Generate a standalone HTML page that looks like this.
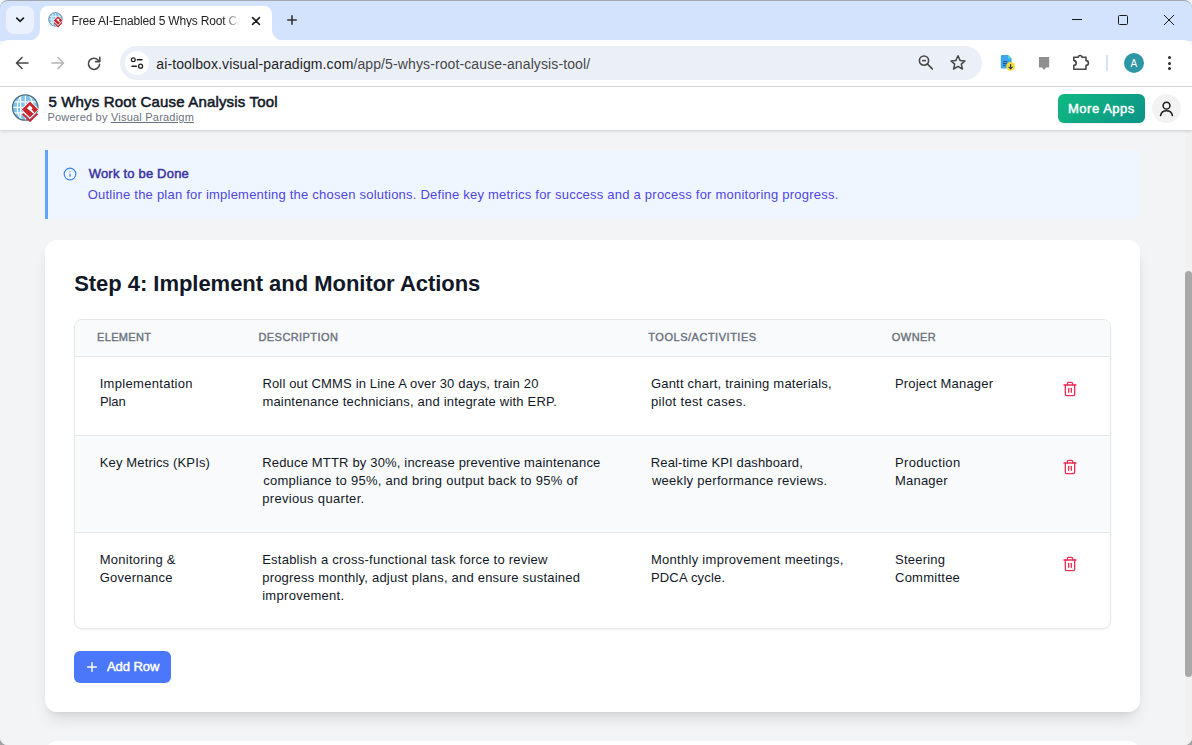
<!DOCTYPE html>
<html><head><meta charset="utf-8">
<style>
*{box-sizing:border-box;margin:0;padding:0}
html,body{width:1192px;height:745px;overflow:hidden;background:#f3f4f6;font-family:"Liberation Sans",sans-serif;position:relative}
.abs{position:absolute}
.t{position:absolute;white-space:nowrap;z-index:3}
</style></head><body>

<div class="abs" style="left:45px;top:150px;width:1095px;height:69px;background:#eff6ff;border-left:3px solid #60a5fa;border-radius:0 6px 6px 0"></div>
<svg class="abs" style="left:63.3px;top:167.4px" width="14" height="14" viewBox="0 0 24 24">
 <circle cx="12" cy="12" r="10" fill="none" stroke="#3b82f6" stroke-width="2"/>
 <path d="M12 16 V12 M12 8 H12.01" fill="none" stroke="#3b82f6" stroke-width="2" stroke-linecap="round"/>
</svg>
<div class="abs" style="left:45px;top:240px;width:1095px;height:472px;background:#fff;border-radius:12px;box-shadow:0 10px 15px -3px rgba(0,0,0,.1),0 4px 6px -4px rgba(0,0,0,.1)"></div>
<div class="abs" style="left:45px;top:741px;width:1095px;height:300px;background:#fff;border-radius:12px;box-shadow:0 10px 15px -3px rgba(0,0,0,.1),0 4px 6px -4px rgba(0,0,0,.1)"></div>
<div class="abs" style="left:74px;top:319px;width:1037px;height:310px;border:1px solid #e5e7eb;border-radius:8px;overflow:hidden;box-shadow:0 1px 2px rgba(0,0,0,.05)">
  <div class="abs" style="left:0;top:0;width:1035px;height:37px;background:#f9fafb;border-bottom:1px solid #e5e7eb"></div>
  <div class="abs" style="left:0;top:115px;width:1035px;height:98px;background:#f9fafb;border-top:1px solid #e5e7eb;border-bottom:1px solid #e5e7eb"></div>
</div>
<svg class="abs" style="left:1062px;top:380.5px" width="16" height="16" viewBox="0 0 24 24" fill="none" stroke="#ec2f55" stroke-width="2" stroke-linecap="round" stroke-linejoin="round"><path d="M3 6h18"/><path d="M19 6v14c0 1-1 2-2 2H7c-1 0-2-1-2-2V6"/><path d="M8 6V4c0-1 1-2 2-2h4c1 0 2 1 2 2v2"/><line x1="10" x2="10" y1="11" y2="17"/><line x1="14" x2="14" y1="11" y2="17"/></svg><svg class="abs" style="left:1062px;top:458.5px" width="16" height="16" viewBox="0 0 24 24" fill="none" stroke="#ec2f55" stroke-width="2" stroke-linecap="round" stroke-linejoin="round"><path d="M3 6h18"/><path d="M19 6v14c0 1-1 2-2 2H7c-1 0-2-1-2-2V6"/><path d="M8 6V4c0-1 1-2 2-2h4c1 0 2 1 2 2v2"/><line x1="10" x2="10" y1="11" y2="17"/><line x1="14" x2="14" y1="11" y2="17"/></svg><svg class="abs" style="left:1062px;top:555.5px" width="16" height="16" viewBox="0 0 24 24" fill="none" stroke="#ec2f55" stroke-width="2" stroke-linecap="round" stroke-linejoin="round"><path d="M3 6h18"/><path d="M19 6v14c0 1-1 2-2 2H7c-1 0-2-1-2-2V6"/><path d="M8 6V4c0-1 1-2 2-2h4c1 0 2 1 2 2v2"/><line x1="10" x2="10" y1="11" y2="17"/><line x1="14" x2="14" y1="11" y2="17"/></svg>
<div class="abs" style="left:74px;top:651px;width:97px;height:32px;background:#4b77fb;border-radius:6px"></div>
<svg class="abs" style="left:84px;top:659px" width="16" height="16"><path d="M8 3.6 V12.4 M3.6 8 H12.4" stroke="#fff" stroke-width="1.4" stroke-linecap="round"/></svg>
<div class="abs" style="left:1185px;top:130px;width:7px;height:615px;background:#f1f1f1"></div>
<div class="abs" style="left:1185px;top:271px;width:7px;height:406px;background:#a8a8a8;border-radius:4px"></div>


<div class="abs" style="left:0;top:0;width:1192px;height:41px;background:#d3e3fd;border-radius:8px 8px 0 0;"></div>
<div class="abs" style="left:0;top:0;width:1192px;height:20px;border-top:1px solid #a3a7ad;border-radius:8px 8px 0 0;"></div>
<div class="abs" style="left:6px;top:6px;width:28px;height:28px;background:#ebf1fd;border-radius:8px"></div>
<svg class="abs" style="left:6px;top:6px" width="28" height="28"><path d="M10.8 12.1 L14.1 15.3 L17.4 12.1" fill="none" stroke="#1f1f1f" stroke-width="1.8" stroke-linecap="round" stroke-linejoin="miter"/></svg>
<!-- active tab -->
<svg class="abs" style="left:0;top:0" width="300" height="42">
 <path d="M40 40 L40 15 Q40 6 49 6 L263 6 Q272 6 272 15 L272 41 L40 41 Z" fill="#fff"/>
 <path d="M29 40.5 A11 11 0 0 0 40 29.5 L40 41 L29 41 Z" fill="#fff"/>
 <path d="M272 29.5 A11 11 0 0 0 283 40.5 L283 41 L272 41 Z" fill="#fff"/>
</svg>
<!-- favicon -->
<svg class="abs" style="left:44px;top:8px" width="24" height="24" viewBox="44 8 24 24"><g transform="translate(55.5 19.4) scale(0.54) translate(-25.2 -107.5)">
 <defs><clipPath id="gc2"><circle cx="25.2" cy="107.5" r="12.4"/></clipPath></defs>
 <circle cx="25.2" cy="107.5" r="12.6" fill="#7cc4ee"/>
 <g clip-path="url(#gc2)" stroke="#fff" stroke-width="1.2" fill="none">
  <path d="M10 101.8 H40 M10 107.3 H40 M10 112.8 H40 M20.6 94 V121 M25.4 94 V121"/>
  <ellipse cx="25.2" cy="107.5" rx="8" ry="13.5"/>
 </g>
 <circle cx="25.2" cy="107.5" r="12.7" fill="none" stroke="#4f6e82" stroke-width="1.3"/>
 <path d="M30 100.6 L39.1 109.5 L30 118.4 L20.9 109.5 Z" fill="#fff"/>
 <path d="M21.3 113.2 L30 121.9 L38.7 113.2 L38.7 111.2 L30 119.9 L21.3 111.2 Z" fill="#fff"/>
 <path d="M30 101.6 L38.1 109.5 L30 117.4 L21.9 109.5 Z" fill="#c8242e"/>
 <path d="M29.8 105.2 L32.7 108.1 L31.5 109.3 L34.6 112.9 L33.7 113.7 L26.8 108.2 Z" fill="#fff"/>
 <path d="M22.6 113.6 L30 121 L37.4 113.6" fill="none" stroke="#c8242e" stroke-width="1.9"/>
</g></svg>
<svg class="abs" style="left:248px;top:13px" width="16" height="16"><path d="M4.6 4.6 L11.4 11.4 M11.4 4.6 L4.6 11.4" stroke="#1f1f1f" stroke-width="1.6" stroke-linecap="round"/></svg>
<svg class="abs" style="left:284px;top:12px" width="16" height="16"><path d="M8 3.2 V12.8 M3.2 8 H12.8" stroke="#333" stroke-width="1.6" stroke-linecap="butt"/></svg>
<!-- window controls -->
<div class="abs" style="left:1072px;top:19px;width:10px;height:1px;background:#1a1a1a"></div>
<div class="abs" style="left:1118px;top:15px;width:10px;height:10px;border:1px solid #1a1a1a;border-radius:1.5px"></div>
<svg class="abs" style="left:1163px;top:14px" width="12" height="12"><path d="M1 1 L11 11 M11 1 L1 11" stroke="#1a1a1a" stroke-width="1"/></svg>
<!-- toolbar -->
<div class="abs" style="left:0;top:40px;width:1192px;height:47px;background:#fff;border-bottom:1px solid #d4d7dc;border-radius:8px 8px 0 0"></div>
<svg class="abs" style="left:14px;top:55px" width="16" height="16"><path d="M14 8 H3 M8 2.5 L2.5 8 L8 13.5" fill="none" stroke="#474747" stroke-width="1.6" stroke-linecap="round" stroke-linejoin="round"/></svg>
<svg class="abs" style="left:50px;top:55px" width="16" height="16"><path d="M2 8 H13 M8 2.5 L13.5 8 L8 13.5" fill="none" stroke="#b4b4b4" stroke-width="1.6" stroke-linecap="round" stroke-linejoin="round"/></svg>
<svg class="abs" style="left:86px;top:55px" width="16" height="16"><path d="M12.6 5.6 A5.6 5.6 0 1 0 13.6 9.2" fill="none" stroke="#474747" stroke-width="1.6" stroke-linecap="round"/><path d="M13.8 2.3 V6.6 H9.5" fill="none" stroke="#474747" stroke-width="1.6" stroke-linecap="round" stroke-linejoin="round"/></svg>
<div class="abs" style="left:120px;top:46px;width:862px;height:34px;background:#ebf0f8;border-radius:17px"></div>
<div class="abs" style="left:125px;top:51px;width:24px;height:24px;background:#fff;border-radius:12px"></div>
<svg class="abs" style="left:129px;top:55px" width="16" height="16">
 <circle cx="4.3" cy="4.7" r="1.9" fill="none" stroke="#1f1f1f" stroke-width="1.25"/><path d="M8.3 4.7 H13" stroke="#1f1f1f" stroke-width="1.4" stroke-linecap="round"/>
 <circle cx="11.6" cy="11.2" r="2" fill="none" stroke="#1f1f1f" stroke-width="1.25"/><path d="M3 11.2 H7.4" stroke="#1f1f1f" stroke-width="1.4" stroke-linecap="round"/>
</svg>
<svg class="abs" style="left:916px;top:53px" width="20" height="20">
 <circle cx="8" cy="7.6" r="4.6" fill="none" stroke="#474747" stroke-width="1.6"/><path d="M6 7.6 H10" stroke="#474747" stroke-width="1.5"/><path d="M11.4 11 L16.3 15.9" stroke="#474747" stroke-width="1.7" stroke-linecap="round"/>
</svg>
<svg class="abs" style="left:948px;top:53px" width="20" height="20">
 <path d="M10 2.8 L12.1 7.4 L17 7.9 L13.3 11.1 L14.4 16 L10 13.4 L5.6 16 L6.7 11.1 L3 7.9 L7.9 7.4 Z" fill="none" stroke="#474747" stroke-width="1.5" stroke-linejoin="round"/>
</svg>
<!-- extension icons -->
<svg class="abs" style="left:998px;top:53px" width="20" height="20">
 <path d="M4 2 H10.2 L13.6 5.4 V14.3 A1.2 1.2 0 0 1 12.4 15.5 H4 A1.2 1.2 0 0 1 2.8 14.3 V3.2 A1.2 1.2 0 0 1 4 2 Z" fill="#3ea5ef"/><path d="M10.2 2 L13.6 5.4 H10.2 Z" fill="#55e6c6"/>
 <path d="M5 8.6 H9.4 M5 10.5 H9.4 M5 12.3 H8.4" stroke="#1d4f86" stroke-width="0.9"/>
 <circle cx="12.6" cy="13.4" r="4.4" fill="#f6da35"/><path d="M12.6 10.9 V15.6 M10.6 13.8 L12.6 15.8 L14.6 13.8" fill="none" stroke="#1f3558" stroke-width="1.1"/>
</svg>
<svg class="abs" style="left:1035px;top:53px" width="20" height="20">
 <path d="M3.9 4 H14.2 V14.5 H11.1 L9.05 17 L7 14.5 H3.9 Z" fill="#8f8f8f"/>
</svg>
<svg class="abs" style="left:1066px;top:48px" width="30" height="30" viewBox="1066 48 30 30">
 <path d="M1073.8 57.3 H1078.3 A1.8 1.8 0 0 1 1081.9 57.3 H1086 V60.6 A2.4 2.4 0 0 1 1086 65.4 V69.2 H1073.8 V65.4 A2.4 2.4 0 0 0 1073.8 60.6 Z" fill="none" stroke="#474747" stroke-width="1.6" stroke-linejoin="round"/>
</svg>
<div class="abs" style="left:1106px;top:55px;width:2px;height:16px;background:#d3e3fd"></div>
<div class="abs" style="left:1124px;top:53px;width:20px;height:20px;background:#2e96a4;border-radius:10px"></div>
<div class="t" style="left:1130.6px;top:58.6px;font-size:10px;line-height:10px;color:#fff;letter-spacing:0">A</div>
<div class="abs" style="left:1168.3px;top:56px;width:3px;height:3px;border-radius:2px;background:#2e2e2e"></div>
<div class="abs" style="left:1168.3px;top:61.5px;width:3px;height:3px;border-radius:2px;background:#2e2e2e"></div>
<div class="abs" style="left:1168.3px;top:67px;width:3px;height:3px;border-radius:2px;background:#2e2e2e"></div>


<div class="abs" style="left:0;top:87px;width:1192px;height:43px;background:#fff;box-shadow:0 2px 3px rgba(0,0,0,.08),0 1px 2px rgba(0,0,0,.06);z-index:1"></div>
<svg class="abs" style="left:0;top:87px;z-index:2" width="50" height="43" viewBox="0 87 50 43">
 <defs><clipPath id="gc"><circle cx="25.2" cy="107.5" r="12.4"/></clipPath></defs>
 <circle cx="25.2" cy="107.5" r="12.6" fill="#7cc4ee"/>
 <g clip-path="url(#gc)" stroke="#fff" stroke-width="1.2" fill="none">
  <path d="M10 101.8 H40 M10 107.3 H40 M10 112.8 H40 M20.6 94 V121 M25.4 94 V121"/>
  <ellipse cx="25.2" cy="107.5" rx="8" ry="13.5"/>
 </g>
 <circle cx="25.2" cy="107.5" r="12.7" fill="none" stroke="#4f6e82" stroke-width="1.3"/>
 <path d="M30 100.6 L39.1 109.5 L30 118.4 L20.9 109.5 Z" fill="#fff"/>
 <path d="M21.3 113.2 L30 121.9 L38.7 113.2 L38.7 111.2 L30 119.9 L21.3 111.2 Z" fill="#fff"/>
 <path d="M30 101.6 L38.1 109.5 L30 117.4 L21.9 109.5 Z" fill="#c8242e"/>
 <path d="M29.8 105.2 L32.7 108.1 L31.5 109.3 L34.6 112.9 L33.7 113.7 L26.8 108.2 Z" fill="#fff"/>
 <path d="M22.6 113.6 L30 121 L37.4 113.6" fill="none" stroke="#c8242e" stroke-width="1.9"/>
</svg>
<div class="abs" style="left:1058px;top:94px;width:87px;height:29px;border-radius:6px;background:linear-gradient(135deg,#10b981,#0d9488);z-index:2;box-shadow:0 1px 2px rgba(0,0,0,.08)"></div>
<div class="abs" style="left:1152px;top:94px;width:29px;height:29px;border-radius:50%;background:#f3f3f3;z-index:2"></div>
<svg class="abs" style="left:1158px;top:100px;z-index:2" width="17" height="17" viewBox="0 0 24 24">
 <circle cx="12" cy="8" r="4.8" fill="none" stroke="#1f1f1f" stroke-width="2.2"/>
 <path d="M3.6 22 A8.6 8.6 0 0 1 20.4 22" fill="none" stroke="#1f1f1f" stroke-width="2.2" stroke-linecap="round"/>
</svg>

<div class="t" style="left:71.50px;top:14.60px;font-size:12px;line-height:12px;font-weight:400;color:#1f1f1f;letter-spacing:-0.177px;width:170px;overflow:hidden;-webkit-mask-image:linear-gradient(90deg,#000 151px,transparent 168px);">Free AI-Enabled 5 Whys Root Cause Analysis Tool</div>
<div class="t" style="left:156.30px;top:56.50px;font-size:14px;line-height:14px;font-weight:400;color:#1f1f1f;letter-spacing:0.112px;"><span style="color:#1f1f1f">ai-toolbox.visual-paradigm.com</span><span style="color:#474747">/app/5-whys-root-cause-analysis-tool/</span></div>
<div class="t" style="left:48.40px;top:94.10px;font-size:15px;line-height:15px;font-weight:400;-webkit-text-stroke:0.525px #111827;color:#111827;letter-spacing:0.173px;">5 Whys Root Cause Analysis Tool</div>
<div class="t" style="left:47.40px;top:112.00px;font-size:11px;line-height:11px;font-weight:400;color:#6b7280;letter-spacing:0.216px;">Powered by <span style="text-decoration:underline;text-decoration-color:#6b7280;text-underline-offset:1px">Visual Paradigm</span></div>
<div class="t" style="left:1068.00px;top:101.80px;font-size:13px;line-height:13px;font-weight:400;-webkit-text-stroke:0.455px #fff;color:#fff;letter-spacing:0.525px;">More Apps</div>
<div class="t" style="left:88.70px;top:167.30px;font-size:13px;line-height:13px;font-weight:400;-webkit-text-stroke:0.455px #3730a3;color:#3730a3;letter-spacing:0.2px;">Work to be Done</div>
<div class="t" style="left:87.70px;top:187.80px;font-size:13px;line-height:13px;font-weight:400;color:#4f46e5;letter-spacing:0.226px;">Outline the plan for implementing the chosen solutions. Define key metrics for success and a process for monitoring progress.</div>
<div class="t" style="left:74.15px;top:273.00px;font-size:22px;line-height:22px;font-weight:700;color:#111827;letter-spacing:-0.034px;">Step 4: Implement and Monitor Actions</div>
<div class="t" style="left:97.10px;top:332.30px;font-size:11px;line-height:11px;font-weight:400;-webkit-text-stroke:0.385px #6b7280;color:#6b7280;letter-spacing:0.3px;">ELEMENT</div>
<div class="t" style="left:258.50px;top:332.30px;font-size:11px;line-height:11px;font-weight:400;-webkit-text-stroke:0.385px #6b7280;color:#6b7280;letter-spacing:0.42px;">DESCRIPTION</div>
<div class="t" style="left:648.30px;top:332.30px;font-size:11px;line-height:11px;font-weight:400;-webkit-text-stroke:0.385px #6b7280;color:#6b7280;letter-spacing:0.52px;">TOOLS/ACTIVITIES</div>
<div class="t" style="left:891.80px;top:332.30px;font-size:11px;line-height:11px;font-weight:400;-webkit-text-stroke:0.385px #6b7280;color:#6b7280;letter-spacing:0.45px;">OWNER</div>
<div class="t" style="left:99.70px;top:377.00px;font-size:13px;line-height:13px;font-weight:400;color:#111827;letter-spacing:0.308px;">Implementation</div>
<div class="t" style="left:99.90px;top:395.00px;font-size:13px;line-height:13px;font-weight:400;color:#111827;letter-spacing:-0.067px;">Plan</div>
<div class="t" style="left:262.40px;top:377.00px;font-size:13px;line-height:13px;font-weight:400;color:#111827;letter-spacing:0.16px;">Roll out CMMS in Line A over 30 days, train 20</div>
<div class="t" style="left:262.40px;top:395.00px;font-size:13px;line-height:13px;font-weight:400;color:#111827;letter-spacing:0.196px;">maintenance technicians, and integrate with ERP.</div>
<div class="t" style="left:650.90px;top:377.00px;font-size:13px;line-height:13px;font-weight:400;color:#111827;letter-spacing:0.213px;">Gantt chart, training materials,</div>
<div class="t" style="left:650.90px;top:395.00px;font-size:13px;line-height:13px;font-weight:400;color:#111827;letter-spacing:0.35px;">pilot test cases.</div>
<div class="t" style="left:895.00px;top:377.00px;font-size:13px;line-height:13px;font-weight:400;color:#111827;letter-spacing:0.186px;">Project Manager</div>
<div class="t" style="left:99.70px;top:456.00px;font-size:13px;line-height:13px;font-weight:400;color:#111827;letter-spacing:0.153px;">Key Metrics (KPIs)</div>
<div class="t" style="left:262.20px;top:456.00px;font-size:13px;line-height:13px;font-weight:400;color:#111827;letter-spacing:0.172px;">Reduce MTTR by 30%, increase preventive maintenance</div>
<div class="t" style="left:263.20px;top:474.00px;font-size:13px;line-height:13px;font-weight:400;color:#111827;letter-spacing:0.281px;">compliance to 95%, and bring output back to 95% of</div>
<div class="t" style="left:262.20px;top:492.00px;font-size:13px;line-height:13px;font-weight:400;color:#111827;letter-spacing:0.324px;">previous quarter.</div>
<div class="t" style="left:650.80px;top:456.00px;font-size:13px;line-height:13px;font-weight:400;color:#111827;letter-spacing:0.139px;">Real-time KPI dashboard,</div>
<div class="t" style="left:651.90px;top:474.00px;font-size:13px;line-height:13px;font-weight:400;color:#111827;letter-spacing:0.293px;">weekly performance reviews.</div>
<div class="t" style="left:895.00px;top:456.00px;font-size:13px;line-height:13px;font-weight:400;color:#111827;letter-spacing:0.334px;">Production</div>
<div class="t" style="left:895.00px;top:474.00px;font-size:13px;line-height:13px;font-weight:400;color:#111827;letter-spacing:0.2px;">Manager</div>
<div class="t" style="left:99.70px;top:553.00px;font-size:13px;line-height:13px;font-weight:400;color:#111827;letter-spacing:0.255px;">Monitoring &amp;</div>
<div class="t" style="left:99.70px;top:571.00px;font-size:13px;line-height:13px;font-weight:400;color:#111827;letter-spacing:0.222px;">Governance</div>
<div class="t" style="left:262.20px;top:553.00px;font-size:13px;line-height:13px;font-weight:400;color:#111827;letter-spacing:0.238px;">Establish a cross-functional task force to review</div>
<div class="t" style="left:262.20px;top:571.00px;font-size:13px;line-height:13px;font-weight:400;color:#111827;letter-spacing:0.212px;">progress monthly, adjust plans, and ensure sustained</div>
<div class="t" style="left:262.20px;top:589.00px;font-size:13px;line-height:13px;font-weight:400;color:#111827;letter-spacing:0.291px;">improvement.</div>
<div class="t" style="left:650.90px;top:553.00px;font-size:13px;line-height:13px;font-weight:400;color:#111827;letter-spacing:0.293px;">Monthly improvement meetings,</div>
<div class="t" style="left:650.90px;top:571.00px;font-size:13px;line-height:13px;font-weight:400;color:#111827;letter-spacing:0.2px;">PDCA cycle.</div>
<div class="t" style="left:895.00px;top:553.00px;font-size:13px;line-height:13px;font-weight:400;color:#111827;letter-spacing:0.229px;">Steering</div>
<div class="t" style="left:895.00px;top:571.00px;font-size:13px;line-height:13px;font-weight:400;color:#111827;letter-spacing:0.25px;">Committee</div>
<div class="t" style="left:107.00px;top:660.00px;font-size:13px;line-height:13px;font-weight:400;-webkit-text-stroke:0.455px #fff;color:#fff;letter-spacing:-0.066px;">Add Row</div>
<svg class="abs" style="left:0;top:735px;z-index:9" width="12" height="10" viewBox="0 735 12 10"><path d="M0 737 A8 8 0 0 0 8 745 L0 745 Z" fill="#a3a3a3"/><path d="M0 737 A8 8 0 0 0 8 745" fill="none" stroke="#f5f5f5" stroke-width="0.8"/></svg>
<svg class="abs" style="left:1180px;top:735px;z-index:9" width="12" height="10" viewBox="1180 735 12 10"><path d="M1192 737 A8 8 0 0 1 1184 745 L1192 745 Z" fill="#a3a3a3"/><path d="M1192 737 A8 8 0 0 1 1184 745" fill="none" stroke="#f5f5f5" stroke-width="0.8"/></svg>
</body></html>
